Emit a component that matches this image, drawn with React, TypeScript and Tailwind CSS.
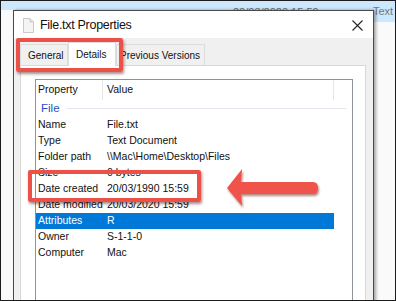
import React from "react";

const rows: [string, string][] = [
  ["Name", "File.txt"],
  ["Type", "Text Document"],
  ["Folder path", "\\\\Mac\\Home\\Desktop\\Files"],
  ["Size", "0 bytes"],
  ["Date created", "20/03/1990 15:59"],
  ["Date modified", "20/03/2020 15:59"],
  ["Attributes", "R"],
  ["Owner", "S-1-1-0"],
  ["Computer", "Mac"],
];

const FileIcon = () => (
  <svg width="11" height="15" viewBox="0 0 11 15">
    <path d="M0.5 0.5 H7 L10.5 4 V14.5 H0.5 Z" fill="#f4f4f4" stroke="#c8c8c8" />
    <path d="M7 0.5 V4 H10.5" fill="#e2e2e2" stroke="#c8c8c8" />
  </svg>
);

const CloseIcon = () => (
  <svg width="11" height="11" viewBox="0 0 11 11">
    <path d="M0.5 0.5 L10.5 10.5 M10.5 0.5 L0.5 10.5" stroke="#222" strokeWidth="1.1" />
  </svg>
);

const Arrow = () => (
  <svg width="100" height="44" viewBox="0 0 100 44">
    <defs>
      <filter id="sh" x="-10%" y="-20%" width="130%" height="150%">
        <feDropShadow dx="1" dy="2" stdDeviation="1.2" floodColor="#7a1a14" floodOpacity="0.55" />
      </filter>
    </defs>
    <path
      d="M2 21 L17 2 L16 15 L88 15 Q93 15 93 21 Q93 27 88 27 L16 27 L17 39 Z"
      fill="#f0524a"
      filter="url(#sh)"
    />
  </svg>
);

const App: React.FC = () => {
  return (
    <div
      className="relative w-[396px] h-[301px] overflow-hidden border border-[#1c1c1c] bg-[#fafafa]"
      style={{ fontFamily: "'Liberation Sans', Arial, sans-serif" }}
    >
      {/* Explorer behind the dialog */}
      <div className="flex h-full">
        <div className="w-[12px] h-[9px] bg-[#cce8ff]" />
        <div className="flex-1 h-[9px] bg-[#cce8ff] pl-[220px]">
          <span className="block text-[11px] leading-[22px] text-[#6b6b6b]">20/03/2020 15:59</span>
        </div>
        <div className="w-[22px] h-[21px] bg-[#cce8ff] pt-[4px] text-[11px] leading-[13px] text-[#777] whitespace-nowrap">
          Text
        </div>
      </div>

      {/* Properties dialog */}
      <div className="absolute left-[12px] top-[9px] w-[361px] h-[300px] flex flex-col bg-white border border-[#4a4a4a] shadow-[2px_0_3px_rgba(0,0,0,0.35)]">
        <div className="h-[27px] flex items-center pt-[2px] pl-[9px] pr-[10px] shrink-0">
          <FileIcon />
          <span className="ml-[6px] text-[12.5px] tracking-[-0.3px] text-[#111]">File.txt Properties</span>
          <span className="ml-auto">
            <CloseIcon />
          </span>
        </div>

        <div className="flex-1 flex flex-col bg-[#f0f0f0] pl-[6px] pr-[7px]">
          {/* Tabs */}
          <div className="flex items-end h-[27px] pt-[4px] shrink-0 text-[10px] text-[#111]">
            <div className="h-[21px] w-[48px] border border-b-0 border-[#dcdcdc] flex items-center pl-[7px]">
              General
            </div>
            <div className="h-[24px] w-[48px] bg-white border border-b-0 border-[#dcdcdc] flex items-center pl-[7px] relative top-[1px]">
              Details
            </div>
            <div className="h-[21px] w-[89px] border border-b-0 border-[#dcdcdc] flex items-center pl-[3px] whitespace-nowrap">
              Previous Versions
            </div>
          </div>

          {/* Panel */}
          <div className="flex-1 bg-white border border-[#d9d9d9] pt-[13px] pl-[14px] pr-[12px]">
            <div className="h-full border border-[#8e949c] text-[10.5px] text-[#111]">
              <div className="flex h-[20px] items-center">
                <div className="w-[67px] h-full flex items-center pl-[2px] border-r border-[#e5e5e5]">Property</div>
                <div className="w-[231px] h-full flex items-center pl-[4px] border-r border-[#e5e5e5]">Value</div>
              </div>
              <div className="flex h-[17px] items-center pl-[5px] pr-[6px]">
                <span className="text-[#1f4fbf] text-[11.5px]">File</span>
                <span className="flex-1 ml-[6px] h-px bg-[#e3e8f0]" />
              </div>
              {rows.map(([k, v]) => {
                const sel = k === "Attributes";
                return (
                  <div
                    key={k}
                    className={
                      sel
                        ? "flex h-[16px] items-center w-[298px] bg-[#0078d7] text-white"
                        : "flex h-[16px] items-center w-[298px]"
                    }
                  >
                    <div className="w-[67px] pl-[2px] whitespace-nowrap">{k}</div>
                    <div className="pl-[4px] whitespace-nowrap">{v}</div>
                  </div>
                );
              })}
            </div>
          </div>
        </div>
      </div>

      {/* Annotations */}
      <div className="absolute left-[15px] top-[37px] w-[107px] h-[34px] border-4 border-[#ec5147] rounded-[2px] shadow-[1px_2px_3px_rgba(60,0,0,0.45)]" />
      <div className="absolute left-[27px] top-[169px] w-[173px] h-[32px] border-4 border-[#ec5147] rounded-[2px] shadow-[1px_2px_3px_rgba(60,0,0,0.45)]" />
      <div className="absolute left-[224px] top-[166px]">
        <Arrow />
      </div>
    </div>
  );
};

export default App;
